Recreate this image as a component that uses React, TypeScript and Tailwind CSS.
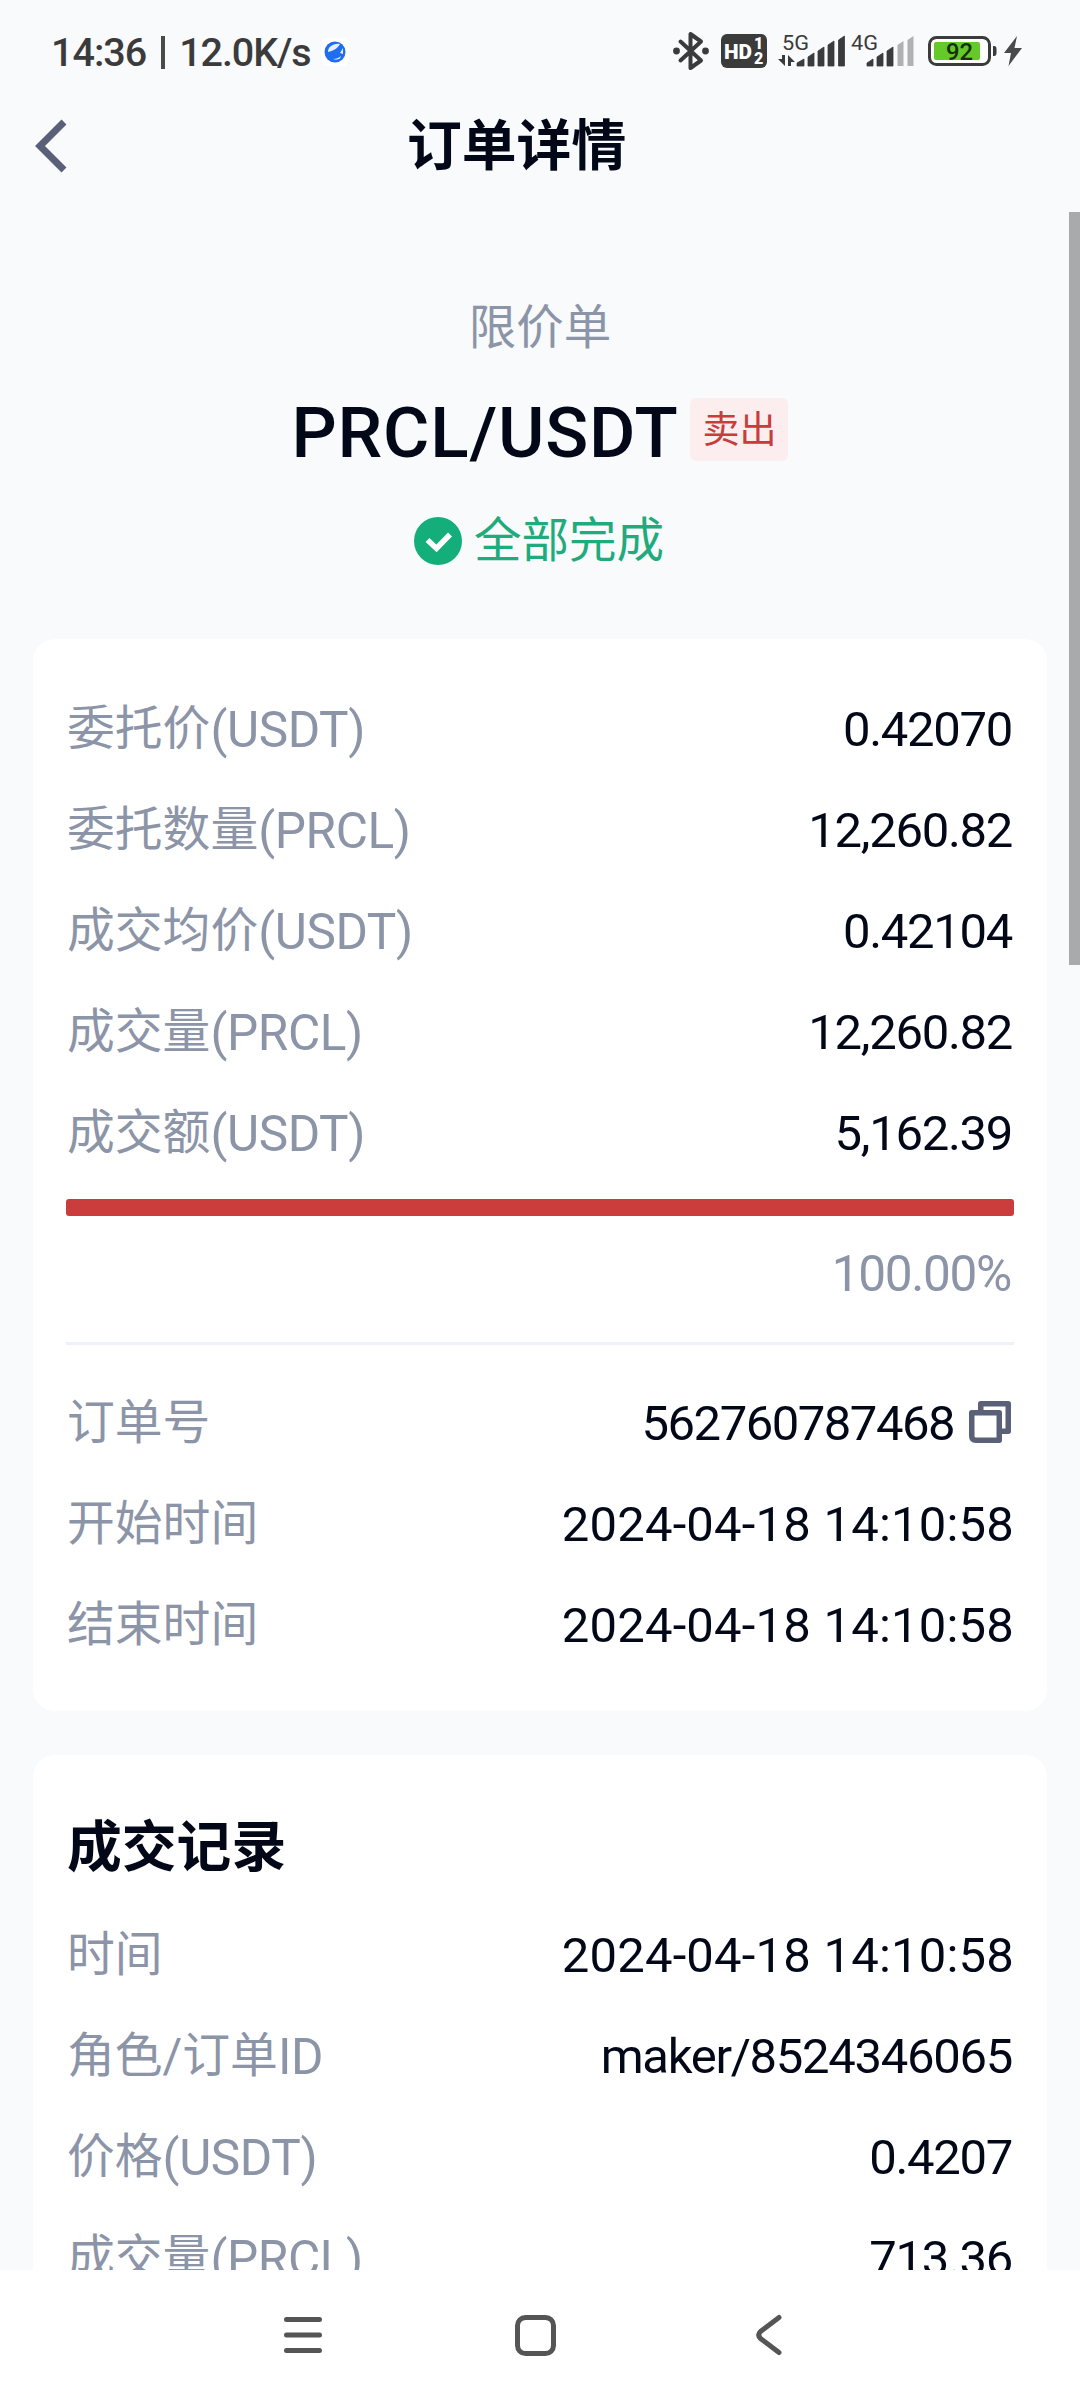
import type { ReactNode } from "react";

type RowData = {
  label: string;
  unit?: string;
  value: string;
  wide?: boolean;
  copyable?: boolean;
};

const SUMMARY_ROWS: RowData[] = [
  { label: "委托价", unit: "(USDT)", value: "0.42070" },
  { label: "委托数量", unit: "(PRCL)", value: "12,260.82" },
  { label: "成交均价", unit: "(USDT)", value: "0.42104" },
  { label: "成交量", unit: "(PRCL)", value: "12,260.82" },
  { label: "成交额", unit: "(USDT)", value: "5,162.39" },
];

const ORDER_ROWS: RowData[] = [
  { label: "订单号", value: "562760787468", copyable: true },
  { label: "开始时间", value: "2024-04-18 14:10:58", wide: true },
  { label: "结束时间", value: "2024-04-18 14:10:58", wide: true },
];

const TRADE_ROWS: RowData[] = [
  { label: "时间", value: "2024-04-18 14:10:58", wide: true },
  { label: "角色/订单", unit: "ID", value: "maker/8524346065" },
  { label: "价格", unit: "(USDT)", value: "0.4207" },
  { label: "成交量", unit: "(PRCL)", value: "713.36" },
];

function CopyIcon() {
  return (
    <svg width="42" height="42" viewBox="0 0 42 42" className="mr-[3px] mb-[6px] ml-[15px] shrink-0" fill="none" stroke="#5a6078" strokeWidth="5.5">
      <path d="M11.750 9V2.750H39.250V30.250H33" strokeLinejoin="round" />
      <path d="M2.750 11.750H30.250V39.250H7Q2.750 39.250 2.750 35Z" strokeLinejoin="round" />
    </svg>
  );
}

function Row({ label, unit, value, wide, copyable }: RowData) {
  return (
    <div className="flex h-[101px] items-center justify-between">
      <p className="flex items-baseline pl-px text-[47.8px] leading-[60px] whitespace-nowrap text-[#8c94a7]">
        <span className="-translate-y-[2px]">{label}</span>
        {unit ? <span className="text-[49.5px] tracking-[-0.4px]">{unit}</span> : null}
      </p>
      <div className="flex items-center">
        <span
          className={
            wide
              ? "mb-[2px] text-[49px] leading-[60px] tracking-[0.2px] whitespace-nowrap"
              : copyable
                ? "mb-[2px] text-[49px] leading-[60px] tracking-[-1.5px] whitespace-nowrap"
                : "mr-[2px] mb-[2px] text-[49px] leading-[60px] tracking-[-1.3px] whitespace-nowrap"
          }
        >
          {value}
        </span>
        {copyable ? <CopyIcon /> : null}
      </div>
    </div>
  );
}

function Card({ className, children }: { className: string; children: ReactNode }) {
  return <section className={`mx-[33px] rounded-[22px] bg-white px-[33px] ${className}`}>{children}</section>;
}

function StatusIcons() {
  return (
    <svg width="360" height="50" viewBox="670 28 360 50" fontFamily="Roboto, sans-serif" fill="#3b3b3b">
      {/* bluetooth */}
      <path d="M680.500 42.500L701 61.500L690.500 69V35L701 42.500L680.500 61.500" fill="none" stroke="#3b3b3b" strokeWidth="4" strokeLinejoin="round" strokeLinecap="round" />
      <circle cx="676.500" cy="52" r="3.400" />
      <circle cx="705.500" cy="52" r="3.400" />

      {/* HD voice on both sims */}
      <rect x="721" y="35" width="46" height="34" rx="6" />
      <text x="724" y="59.500" fontSize="21" fontWeight="900" fill="#fff" textLength="28" lengthAdjust="spacingAndGlyphs">HD</text>
      <text x="754" y="50" fontSize="16" fontWeight="900" fill="#fff">1</text>
      <text x="754" y="65" fontSize="16" fontWeight="900" fill="#fff">2</text>

      {/* sim 1 */}
      <text x="782" y="50.500" fontSize="21" textLength="27" lengthAdjust="spacingAndGlyphs">5G</text>
      <path d="M785 56V67L778 60H782V56ZM788 67V56L795 63H791V67Z" />
      <path d="M797 67V64L804 60V67ZM808 67V58L814 54V67ZM818 67V52L824 48V67ZM828 67V46L834 42V67ZM838.500 67V41L844.500 37V67Z" stroke="#3b3b3b" strokeWidth="0.8" strokeLinejoin="round" />

      {/* sim 2 */}
      <text x="851" y="50.500" fontSize="21" textLength="27" lengthAdjust="spacingAndGlyphs">4G</text>
      <path d="M867 67V64L873 60V67ZM877 67V58L883 54V67ZM887 67V52L893 48V67Z" stroke="#3b3b3b" strokeWidth="0.8" strokeLinejoin="round" />
      <path d="M897.500 67V46L903.500 42V67ZM907.500 67V41L913.500 37V67Z" fill="#b0b1b3" />

      {/* battery */}
      <rect x="929.500" y="38.500" width="60" height="27" rx="7" fill="#fff" stroke="#3b3b3b" strokeWidth="3" />
      <rect x="934" y="43" width="46" height="18" rx="2" fill="#65c92a" />
      <path d="M993 47H994Q996.500 47 996.500 50V54Q996.500 57 994 57H993Z" />
      <text x="946" y="60.500" fontSize="23" fontWeight="500" fill="#163008" textLength="27" lengthAdjust="spacingAndGlyphs">92</text>
      <path d="M1017 37L1004 54H1011L1008.500 67L1022 49H1014.500Z" fill="#4a4a4a" />
    </svg>
  );
}

function StatusBar() {
  return (
    <div className="flex h-[98px] items-center justify-between pt-[6px] pr-[50px] pl-[51px] text-[#3b3b3b]">
      <div className="flex items-center text-[39.5px] leading-[48px] font-medium">
        <span className="mt-px tracking-[-1px]">14:36</span>
        <span className="ml-[15px] h-[33px] w-[4px] bg-[#4a4a4a]" />
        <span className="mt-px ml-[14px] tracking-[-1.1px]">12.0K/s</span>
        <svg width="28" height="28" viewBox="0 0 28 28" className="ml-[10px]">
          <rect width="28" height="28" rx="7" fill="#fff" />
          <circle cx="14" cy="14" r="10.500" fill="#1f6df0" />
          <path d="M7 14C7 9 12 5 19 6C16 11 12 13 7 14ZM19 15L22 10V16ZM12 21Q17 21 20 18Q19 23 12 21Z" fill="#e4efff" />
        </svg>
      </div>
      <StatusIcons />
    </div>
  );
}

function NavBar() {
  return (
    <nav className="flex h-[130px] shrink-0 items-center bg-white pl-[283px]">
      <svg width="40" height="40" viewBox="0 0 40 40" stroke="#555" strokeWidth="5" strokeLinecap="round">
        <path d="M3.500 4.500H36.500M3.500 20H36.500M3.500 35.500H36.500" />
      </svg>
      <svg width="41" height="41" viewBox="0 0 41 41" className="ml-[192px]" fill="none" stroke="#555" strokeWidth="5">
        <rect x="2.500" y="2.500" width="36" height="36" rx="8" />
      </svg>
      <svg width="27" height="42" viewBox="0 0 27 42" className="ml-[200px]" fill="none" stroke="#555" strokeWidth="5" strokeLinecap="round" strokeLinejoin="round">
        <path d="M23 3.500L4.500 17.500Q1 21 4.500 24.500L23 38.500" />
      </svg>
    </nav>
  );
}

export default function App() {
  return (
    <div className="flex h-[2400px] w-[1080px] flex-col overflow-hidden bg-[#f8fafc] font-[Roboto,'Noto_Sans_CJK_SC',sans-serif] text-[#020817]">
      <StatusBar />

      <header className="flex h-[114px] shrink-0 items-start pl-[33px]">
        <svg width="36" height="56" viewBox="0 0 36 56" className="mt-[20px]" fill="none" stroke="#5a6078" strokeWidth="7">
          <path d="M31 4L7 28L31 52" />
        </svg>
        <h1 className="mt-[4px] ml-[338px] text-[54.8px] leading-[88px] font-bold">订单详情</h1>
      </header>

      <main className="relative h-[2058px] overflow-hidden">
        <div className="absolute top-0 right-0 h-[753px] w-[11px] bg-[#a9aaac]" />

        <div className="flex h-[427px] flex-col items-center pt-[81px]">
          <p className="text-[47.5px] leading-[70px] text-[#8c94a7]">限价单</p>
          <div className="mt-[30px] flex items-center">
            <h2 className="text-[71px] leading-[80px] font-medium tracking-[0.8px]">PRCL/USDT</h2>
            <span className="mb-[8px] ml-[12px] flex h-[63px] w-[98px] items-center justify-center rounded-[6px] bg-[#fceeee] pt-[2px] text-[37px] leading-none text-[#c93c3c]">
              卖出
            </span>
          </div>
          <div className="mt-[37px] flex items-center pr-[2px]">
            <svg width="48" height="48" viewBox="0 0 48 48">
              <circle cx="24" cy="24" r="24" fill="#14ae7b" />
              <path d="M13.500 23L22.500 31.500L36 17.500" fill="none" stroke="#fff" strokeWidth="5.500" />
            </svg>
            <p className="mt-px ml-[12px] text-[47.5px] leading-[60px] text-[#1fab7b]">全部完成</p>
          </div>
        </div>

        <Card className="h-[1072px] pt-[41px]">
          {SUMMARY_ROWS.map((row) => (
            <Row key={row.label} {...row} />
          ))}
          <div className="mt-[14px] h-[17px] rounded-[3px] bg-[#cb3c3c]" />
          <p className="mt-[28px] pr-[3px] text-right text-[49.5px] leading-[60px] tracking-[-1.3px] text-[#8c94a7]">100.00%</p>
          <div className="mt-[38px] mb-[29px] h-[3px] bg-[#eef1fa]" />
          {ORDER_ROWS.map((row) => (
            <Row key={row.label} {...row} />
          ))}
        </Card>

        <Card className="mt-[44px] h-[700px]">
          <h3 className="pt-[52px] pb-[19px] pl-px text-[54.8px] leading-[80px] font-bold">成交记录</h3>
          {TRADE_ROWS.map((row) => (
            <Row key={row.label} {...row} />
          ))}
        </Card>
      </main>

      <NavBar />
    </div>
  );
}
